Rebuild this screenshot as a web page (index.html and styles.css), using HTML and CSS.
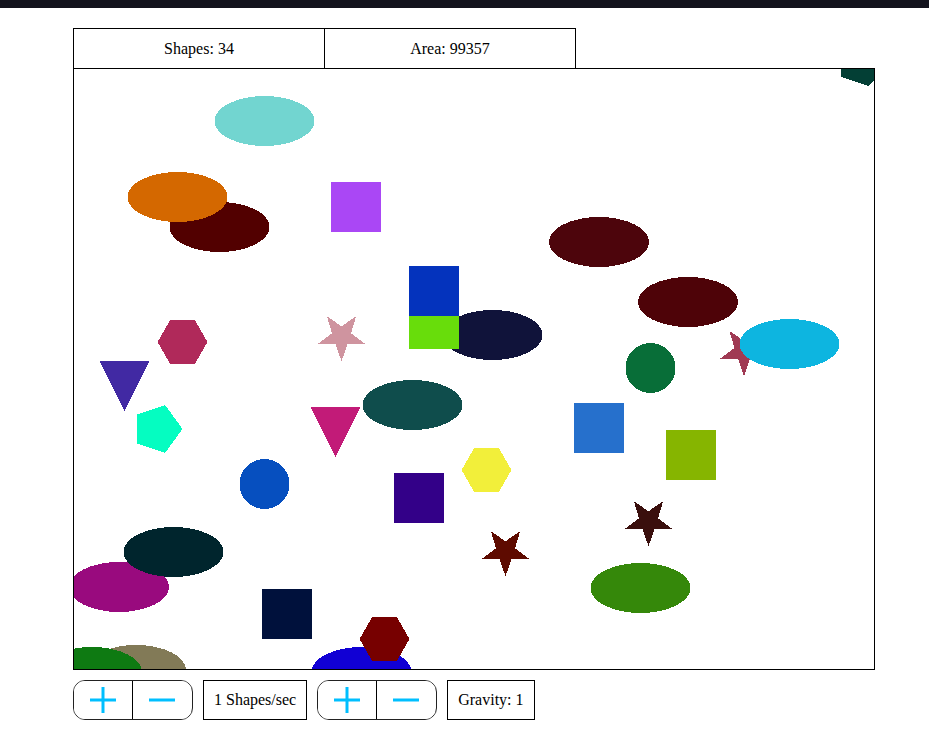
FILE: index.html
```html
<!DOCTYPE html>
<html>
<head>
<meta charset="utf-8">
<title>Shapes</title>
<link rel="stylesheet" href="styles.css">
</head>
<body>
<div class="topbar"></div>
<div class="app">
  <div class="stats">
    <div class="stat">Shapes: 34</div>
    <div class="stat">Area: 99357</div>
  </div>
  <div class="stage">
    <svg class="scene" width="800" height="600" viewBox="0 0 800 600" xmlns="http://www.w3.org/2000/svg">
      <defs>
        <polygon id="star" points="0,25 -5.88,8.09 -23.78,7.73 -9.51,-3.09 -14.69,-20.23 0,-10 14.69,-20.23 9.51,-3.09 23.78,7.73 5.88,8.09"/>
        <polygon id="hex" points="25,0 12.5,21.65 -12.5,21.65 -25,0 -12.5,-21.65 12.5,-21.65"/>
        <polygon id="pent" points="25,0 7.73,23.78 -20.23,14.69 -20.23,-14.69 7.73,-23.78"/>
        <polygon id="tri" points="-25,-25 25,-25 0,25"/>
      </defs>
      <ellipse cx="190.5" cy="52" rx="50" ry="25" fill="#72d5d0"/>
      <ellipse cx="145.5" cy="158" rx="50" ry="25" fill="#520000"/>
      <ellipse cx="103.5" cy="128" rx="50" ry="25" fill="#d46800"/>
      <rect x="257" y="113" width="50" height="50" fill="#aa47f5"/>
      <polygon points="767,0 800,0 800,11 794,17 767,8" fill="#033f35"/>
      <ellipse cx="525" cy="173" rx="50" ry="25" fill="#4d050c"/>
      <ellipse cx="418.5" cy="266" rx="50" ry="25" fill="#10133a"/>
      <rect x="335" y="230" width="50" height="50" fill="#68dd0b"/>
      <rect x="335" y="197" width="50" height="50" fill="#0433bd"/>
      <ellipse cx="614" cy="233" rx="50" ry="25" fill="#4e0308"/>
      <use href="#star" x="670" y="282" fill="#a03a54"/>
      <ellipse cx="715.5" cy="275" rx="50" ry="25" fill="#0db5e0"/>
      <circle cx="576.5" cy="299" r="25" fill="#086e38"/>
      <ellipse cx="338.5" cy="336" rx="50" ry="25" fill="#0f4d4c"/>
      <rect x="500" y="334" width="50" height="50" fill="#2670cc"/>
      <rect x="592" y="361" width="50" height="50" fill="#86b500"/>
      <use href="#hex" x="412.5" y="401" fill="#f2ef3a"/>
      <use href="#hex" x="108.5" y="273" fill="#b0295a"/>
      <use href="#tri" x="50.5" y="317" fill="#4129a3"/>
      <use href="#pent" x="83.5" y="360" fill="#05fdc1"/>
      <use href="#star" x="267.5" y="267.3" fill="#cf949f"/>
      <use href="#tri" x="261.5" y="363" fill="#c21b78"/>
      <circle cx="190.5" cy="415" r="25" fill="#064fbf"/>
      <rect x="320" y="404" width="50" height="50" fill="#330088"/>
      <ellipse cx="45" cy="518" rx="50" ry="25" fill="#990a7e"/>
      <ellipse cx="99.5" cy="483" rx="50" ry="25" fill="#00252d"/>
      <rect x="188" y="520" width="50" height="50" fill="#00113c"/>
      <ellipse cx="287.5" cy="603" rx="50" ry="25" fill="#1100d4"/>
      <use href="#hex" x="310.5" y="570" fill="#770000"/>
      <ellipse cx="62" cy="601" rx="50" ry="25" fill="#827a57"/>
      <ellipse cx="18" cy="603" rx="50" ry="25" fill="#0e7a12"/>
      <use href="#star" x="574.5" y="452.3" fill="#3a0f0d"/>
      <use href="#star" x="431.5" y="482.3" fill="#5e0b00"/>
      <ellipse cx="566.5" cy="519" rx="50" ry="25" fill="#35880a"/>
    </svg>
  </div>
  <div class="controls">
    <div class="btn-group">
      <button class="btn" aria-label="more shapes">
        <svg class="icon" width="26" height="26" viewBox="0 0 26 26"><path d="M13 0V26M0 13H26"/></svg>
      </button>
      <button class="btn" aria-label="fewer shapes">
        <svg class="icon" width="26" height="26" viewBox="0 0 26 26"><path d="M0 13H26"/></svg>
      </button>
    </div>
    <div class="readout">1 Shapes/sec</div>
    <div class="btn-group">
      <button class="btn" aria-label="more gravity">
        <svg class="icon" width="26" height="26" viewBox="0 0 26 26"><path d="M13 0V26M0 13H26"/></svg>
      </button>
      <button class="btn" aria-label="less gravity">
        <svg class="icon" width="26" height="26" viewBox="0 0 26 26"><path d="M0 13H26"/></svg>
      </button>
    </div>
    <div class="readout">Gravity: 1</div>
  </div>
</div>
</body>
</html>
```
FILE: styles.css
```css
html, body {
  margin: 0;
  padding: 0;
  background: #ffffff;
}

body {
  font-family: "Liberation Serif", "Times New Roman", serif;
  font-size: 16px;
  color: #000;
}

.topbar {
  height: 8px;
  background: #13131d;
}

.app {
  padding: 20px 0 0 73px;
}

.stats {
  display: flex;
}

.stat {
  width: 250px;
  height: 39px;
  border: 1px solid #000;
  border-bottom: none;
  display: flex;
  align-items: center;
  justify-content: center;
  box-sizing: content-box;
}

.stat + .stat {
  margin-left: -1px;
}

.stage {
  width: 800px;
  height: 600px;
  border: 1px solid #000;
}

.scene {
  display: block;
  shape-rendering: crispEdges;
}

.controls {
  display: flex;
  gap: 10px;
  margin-top: 10px;
}

.btn-group {
  display: flex;
  width: 118px;
  height: 38px;
  border: 1px solid #222;
  border-radius: 12px;
  overflow: hidden;
}

.btn {
  width: 59px;
  height: 38px;
  padding: 0;
  margin: 0;
  border: none;
  background: #fff;
  display: flex;
  align-items: center;
  justify-content: center;
}

.btn + .btn {
  border-left: 1px solid #000;
  width: 59px;
}

.btn:first-child {
  width: 58px;
}

.icon {
  display: block;
}

.icon path {
  stroke: #00bfff;
  stroke-width: 3;
  fill: none;
}

.readout {
  height: 38px;
  padding: 0 10px;
  border: 1px solid #000;
  display: flex;
  align-items: center;
}
```
